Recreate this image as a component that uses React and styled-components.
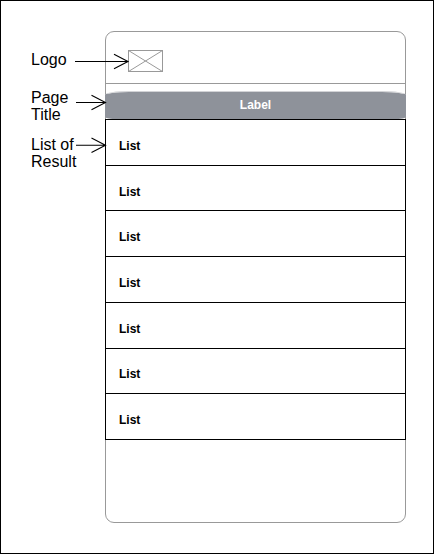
import React from "react";
import styled, { createGlobalStyle } from "styled-components";

const GlobalStyle = createGlobalStyle`
  * { box-sizing: border-box; }
  body { margin: 0; background: #fff; }
`;

const Canvas = styled.main`
  position: relative;
  display: flex;
  width: 434px;
  height: 554px;
  padding: 30px 27px 30px 30px;
  border: 1px solid #000;
  background: #fff;
  color: #000;
  font-family: "Liberation Sans", Arial, sans-serif;
  overflow: hidden;
`;

const Notes = styled.aside`
  flex: 0 0 74px;
  display: flex;
  flex-direction: column;
  padding-top: 20px;
`;

const Note = styled.p`
  margin: 0 0 ${(p) => p.$gap}px;
  font-size: 16px;
  line-height: 17px;
  white-space: pre;
`;

const Phone = styled.section`
  flex: 0 0 301px;
  height: 492px;
  border: 1px solid #999;
  border-radius: 9px;
`;

const Header = styled.header`
  height: 52px;
  padding: 18px 0 0 22px;
  border-bottom: 1px solid #999;
`;

const LogoImage = styled.svg`
  display: block;
  width: 35px;
  height: 22px;
  fill: none;
  stroke: #999;
`;

const Banner = styled.h1`
  display: flex;
  align-items: flex-start;
  justify-content: center;
  height: 28px;
  margin: 7px -1px 0;
  padding-top: 6px;
  border-top: 1px solid #d2d3d6;
  border-radius: 24px 24px 12px 12px / 4px 4px 2px 2px;
  background: #8e929a;
  background-clip: padding-box;
  color: #fff;
  font-size: 12px;
  line-height: 14px;
`;

const List = styled.ul`
  margin: 0 -1px;
  padding: 0;
  border: 1px solid #000;
  background: #fff;
  list-style: none;
`;

const ListItem = styled.li`
  height: ${(p) => p.$height}px;
  padding: ${(p) => p.$top}px 0 0 13px;
  border-bottom: 1px solid #000;
  font-size: 12px;
  font-weight: 700;
  line-height: 14px;

  &:last-child { border-bottom: 0; }
`;

const Arrows = styled.svg`
  position: absolute;
  top: -1px;
  left: -1px;
  width: 434px;
  height: 554px;
  fill: none;
  stroke: #000;
  stroke-width: 1.1;
  pointer-events: none;
`;

const notes = [
  { text: "Logo", gap: 21 },
  { text: "Page\nTitle", gap: 13 },
  { text: "List of\nResult", gap: 0 },
];

const rows = [
  { height: 46, top: 19 },
  { height: 45, top: 19 },
  { height: 46, top: 19 },
  { height: 46, top: 19 },
  { height: 46, top: 19 },
  { height: 45, top: 18 },
  { height: 45, top: 19 },
];

const arrows = [
  { from: 75, to: 128, y: 61.5 },
  { from: 76, to: 105.5, y: 102.5 },
  { from: 76, to: 105.5, y: 145.3 },
];

export default function App() {
  return (
    <>
      <GlobalStyle />
      <Canvas>
        <Notes>
          {notes.map((n) => (
            <Note key={n.text} $gap={n.gap}>{n.text}</Note>
          ))}
        </Notes>
        <Phone>
          <Header>
            <LogoImage viewBox="0 0 35 22">
              <rect x="0.5" y="0.5" width="34" height="21" />
              <path d="M.5.5l34 21M34.5.5l-34 21" />
            </LogoImage>
          </Header>
          <Banner>Label</Banner>
          <List>
            {rows.map(({ height, top }, i) => (
              <ListItem key={i} $height={height} $top={top}>List</ListItem>
            ))}
          </List>
        </Phone>
        <Arrows viewBox="0 0 434 554">
          {arrows.map(({ from, to, y }) => (
            <path
              key={y}
              d={`M${from} ${y}H${to}M${to - 14} ${y - 7.3}L${to} ${y}L${to - 14} ${y + 7.3}`}
            />
          ))}
        </Arrows>
      </Canvas>
    </>
  );
}
